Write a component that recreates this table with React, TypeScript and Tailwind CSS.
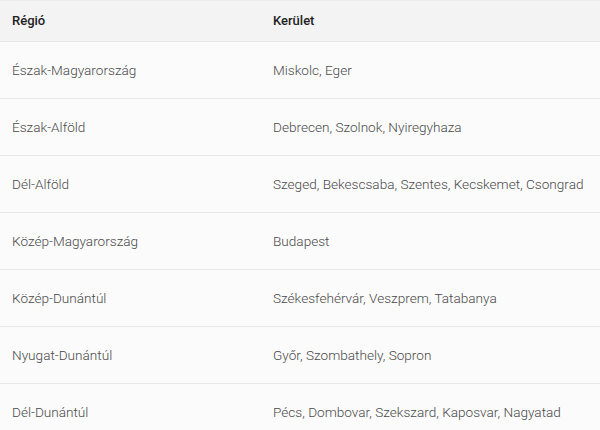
import React from "react";

const rows: [string, string][] = [
  ["Észak-Magyarország", "Miskolc, Eger"],
  ["Észak-Alföld", "Debrecen, Szolnok, Nyiregyhaza"],
  ["Dél-Alföld", "Szeged, Bekescsaba, Szentes, Kecskemet, Csongrad"],
  ["Közép-Magyarország", "Budapest"],
  ["Közép-Dunántúl", "Székesfehérvár, Veszprem, Tatabanya"],
  ["Nyugat-Dunántúl", "Győr, Szombathely, Sopron"],
  ["Dél-Dunántúl", "Pécs, Dombovar, Szekszard, Kaposvar, Nagyatad"],
];

export default function App() {
  return (
    <div
      className="w-[600px] h-[430px] overflow-hidden bg-[#fbfbfb]"
      style={{ fontFamily: "Roboto, 'Noto Sans', sans-serif" }}
    >
      <div className="border-t border-[#ececec] bg-[#f3f3f3] h-[41px] flex items-center text-[13px] font-medium text-[#222]">
        <div className="w-[273px] pl-3">Régió</div>
        <div>Kerület</div>
      </div>
      {rows.map(([a, b]) => (
        <div
          key={a}
          className="border-t border-[#e8e8e8] h-[57px] flex items-center text-[13.6px] font-light text-[#4a4a4a]"
        >
          <div className="w-[273px] pl-3">{a}</div>
          <div>{b}</div>
        </div>
      ))}
    </div>
  );
}
